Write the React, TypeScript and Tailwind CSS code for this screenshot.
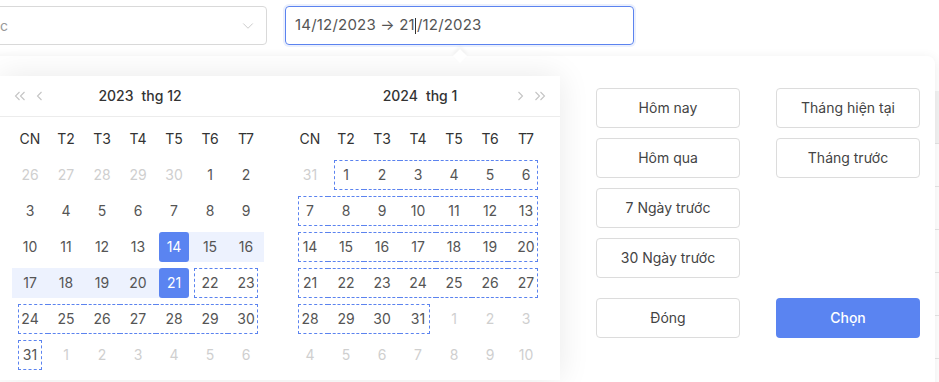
import { ChevronDown } from "lucide-react"

type Cell = { d: number; out: boolean; t: number }

const DAY_NAMES = ["CN", "T2", "T3", "T4", "T5", "T6", "T7"]

const t = (y: number, m: number, d: number) => new Date(y, m, d).getTime()

const SEL_START = t(2023, 11, 14)
const SEL_END = t(2023, 11, 21)
const HOVER_START = t(2023, 11, 22)
const HOVER_END = t(2024, 0, 31)

function buildMonth(y: number, m: number): Cell[][] {
  const first = new Date(y, m, 1)
  const rows: Cell[][] = []
  for (let r = 0; r < 6; r++) {
    const row: Cell[] = []
    for (let c = 0; c < 7; c++) {
      const date = new Date(y, m, 1 - first.getDay() + r * 7 + c)
      row.push({ d: date.getDate(), out: date.getMonth() !== m, t: date.getTime() })
    }
    rows.push(row)
  }
  return rows
}

const isHover = (c?: Cell) => !!c && !c.out && c.t >= HOVER_START && c.t <= HOVER_END

function DoubleChevron({ dir }: { dir: "left" | "right" }) {
  return (
    <svg width="12" height="10" viewBox="0 0 12 10" fill="none" stroke="#c4c4c4" strokeWidth="1.1">
      {dir === "left" ? (
        <>
          <path d="M5.5 1 1.5 5l4 4" />
          <path d="M10.5 1 6.5 5l4 4" />
        </>
      ) : (
        <>
          <path d="M1.5 1l4 4-4 4" />
          <path d="M6.5 1l4 4-4 4" />
        </>
      )}
    </svg>
  )
}

function SingleChevron({ dir }: { dir: "left" | "right" }) {
  return (
    <svg width="7" height="10" viewBox="0 0 7 10" fill="none" stroke="#c4c4c4" strokeWidth="1.1">
      <path d={dir === "left" ? "M5.5 1 1.5 5l4 4" : "M1.5 1l4 4-4 4"} />
    </svg>
  )
}

function DayCell({ cell, prev, next, col }: { cell: Cell; prev?: Cell; next?: Cell; col: number }) {
  const selected = !cell.out && (cell.t === SEL_START || cell.t === SEL_END)
  const inRange = !cell.out && cell.t > SEL_START && cell.t < SEL_END
  const hover = isHover(cell)
  const segStart = hover && (col === 0 || !isHover(prev))
  const segEnd = hover && (col === 6 || !isHover(next))
  const afterSel = !!prev && !prev.out && prev.t === SEL_END

  return (
    <div className="relative flex h-9 items-center justify-center">
      {inRange && <div className="absolute inset-x-0 top-[3px] h-[30px] bg-[#edf2fe]" />}
      {selected && cell.t === SEL_START && (
        <div className="absolute left-1/2 right-0 top-[3px] h-[30px] bg-[#edf2fe]" />
      )}
      {selected && cell.t === SEL_END && (
        <div className="absolute left-0 right-1/2 top-[3px] h-[30px] bg-[#edf2fe]" />
      )}
      {hover && (
        <div
          className={[
            "absolute top-[3px] h-[30px] border-y border-dashed border-[#5b83ef]",
            segStart ? (afterSel ? "left-[2px] border-l" : "left-[6px] border-l") : "left-0",
            segEnd ? "right-[6px] border-r" : "right-0",
          ].join(" ")}
        />
      )}
      <div
        className={[
          "relative flex h-[30px] w-[30px] items-center justify-center rounded-[3px] text-sm",
          selected ? "bg-[#5a84f1] text-white" : cell.out ? "text-[#cfcfcf]" : "text-[#555]",
        ].join(" ")}
      >
        {cell.d}
      </div>
    </div>
  )
}

function MonthPanel({ year, month }: { year: number; month: number }) {
  const rows = buildMonth(year, month)
  return (
    <div className="w-[280px] pl-3 pt-1">
      <div className="grid w-[252px] grid-cols-7">
        {DAY_NAMES.map((n) => (
          <div key={n} className="flex h-9 items-center justify-center text-sm text-[#333]">
            {n}
          </div>
        ))}
      </div>
      {rows.map((row, r) => (
        <div key={r} className="grid w-[252px] grid-cols-7">
          {row.map((cell, c) => (
            <DayCell key={c} cell={cell} prev={row[c - 1]} next={row[c + 1]} col={c} />
          ))}
        </div>
      ))}
    </div>
  )
}

function Header({ year, month, side }: { year: number; month: number; side: "left" | "right" }) {
  return (
    <div className="flex h-10 w-[280px] items-center px-3">
      <div className="flex w-[60px] items-center gap-[10px] pl-[2px]">
        {side === "left" && (
          <>
            <DoubleChevron dir="left" />
            <SingleChevron dir="left" />
          </>
        )}
      </div>
      <div className="flex flex-1 items-center justify-center gap-2 text-sm font-medium text-[#333]">
        <span>{year}</span>
        <span>thg {month}</span>
      </div>
      <div className="flex w-[60px] items-center justify-end gap-[10px] pr-[2px]">
        {side === "right" && (
          <>
            <SingleChevron dir="right" />
            <DoubleChevron dir="right" />
          </>
        )}
      </div>
    </div>
  )
}

const PRESETS = [
  ["Hôm nay", "Tháng hiện tại"],
  ["Hôm qua", "Tháng trước"],
  ["7 Ngày trước", null],
  ["30 Ngày trước", null],
]

function PresetButton({ label }: { label: string }) {
  return (
    <button
      type="button"
      className="h-10 w-36 rounded-[4px] border border-[#dcdcdc] bg-white text-sm text-[#444]"
    >
      {label}
    </button>
  )
}

export default function App() {
  return (
    <div className="relative h-[382px] w-[939px] overflow-hidden bg-white font-['Inter',sans-serif]">
      {/* Filter bar */}
      <div className="flex items-center gap-[18px] pt-[6px]">
        <div className="-ml-[13px] flex h-[39px] w-[280px] items-center justify-between rounded-[4px] border border-[#d9d9d9] pl-3 pr-[9px]">
          <span className="text-sm text-[#999]">c</span>
          <ChevronDown className="h-[18px] w-[18px] text-[#c8c8c8]" strokeWidth={1.25} />
        </div>
        <div className="flex h-[39px] w-[349px] items-center rounded-[4px] border border-[#5b83ef] px-[9px] text-[15px] tracking-[0.2px] text-[#555] shadow-[0_0_0_2px_rgba(91,131,239,0.12)]">
          <span>14/12/2023 → 21</span>
          <span className="mx-[0.5px] inline-block h-4 w-px bg-[#333]" />
          <span>/12/2023</span>
        </div>
      </div>

      {/* Table behind the popup */}
      <div className="mt-[46px]">
        <div className="h-[53px] border-b border-[#e4e4e4] bg-[#f3f3f3]" />
        {[0, 1, 2, 3, 4].map((i) => (
          <div key={i} className="h-[43px] border-b border-[#e6e6e6]" />
        ))}
      </div>

      {/* Popup arrow */}
      <div className="absolute left-[455px] top-[51px] z-20 h-2.5 w-2.5 rotate-45 bg-white shadow-[-2px_-2px_4px_rgba(0,0,0,0.05)]" />

      {/* Date range popup */}
      <div className="absolute -left-5 right-[4px] top-[56px] -bottom-5 z-10 flex items-start rounded-tr-lg bg-white pl-5 shadow-[0_2px_12px_rgba(0,0,0,0.08)]">
        <div className="mt-5 w-[560px] bg-white shadow-[0_0_30px_rgba(0,0,0,0.09)]">
          <div className="flex border-b border-[#ececec]">
            <Header year={2023} month={12} side="left" />
            <Header year={2024} month={1} side="right" />
          </div>
          <div className="flex pb-[7px]">
            <MonthPanel year={2023} month={11} />
            <MonthPanel year={2024} month={0} />
          </div>
        </div>

        <div className="flex flex-col pl-9 pt-8">
          <div className="flex flex-col gap-[10px]">
            {PRESETS.map(([a, b], i) => (
              <div key={i} className="flex gap-9">
                <PresetButton label={a as string} />
                {b && <PresetButton label={b} />}
              </div>
            ))}
          </div>
          <div className="mt-5 flex gap-9">
            <PresetButton label="Đóng" />
            <button
              type="button"
              className="h-10 w-36 rounded-[4px] bg-[#5a84f1] text-sm font-medium text-white"
            >
              Chọn
            </button>
          </div>
        </div>
      </div>
    </div>
  )
}
